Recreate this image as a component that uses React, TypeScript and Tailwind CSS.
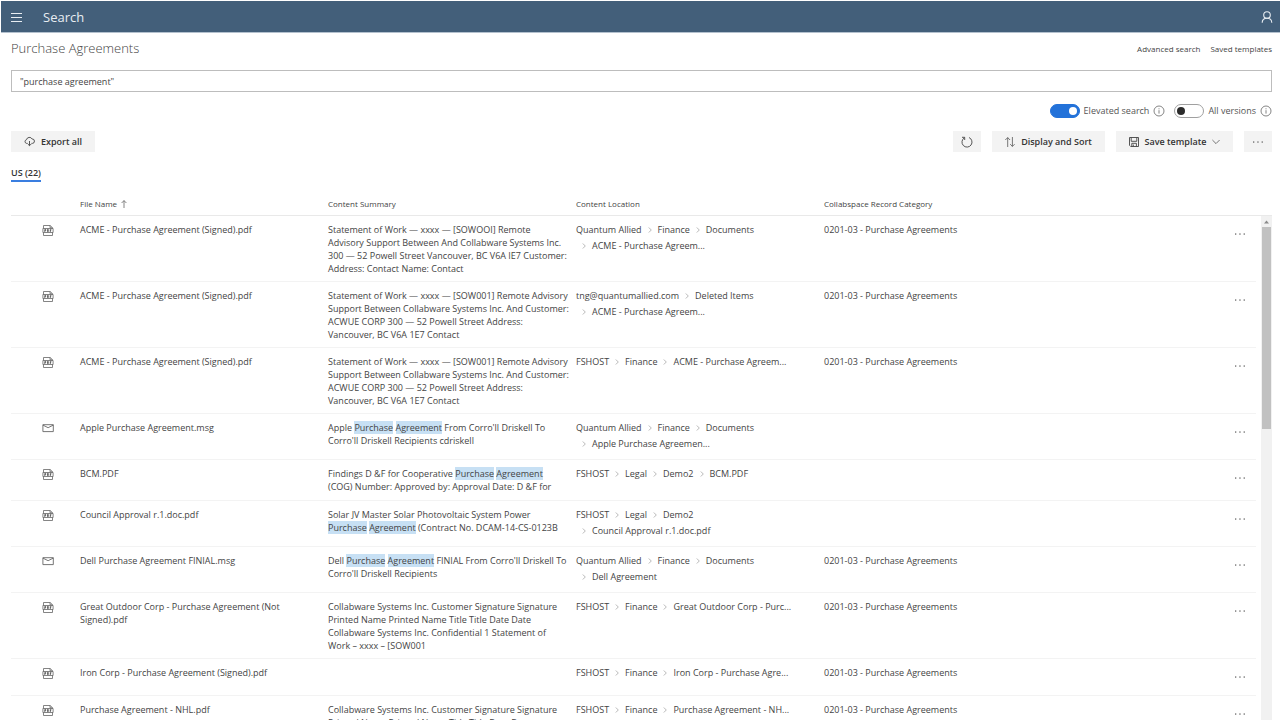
import { Fragment, type ReactNode } from "react";

type Kind = "pdf" | "msg";

interface Row {
  kind: Kind;
  name: string;
  summary: string[];
  location: string[][];
  category?: string;
}

const CATEGORY = "0201-03 - Purchase Agreements";

const rows: Row[] = [
  {
    kind: "pdf",
    name: "ACME - Purchase Agreement (Signed).pdf",
    summary: [
      "Statement of Work — xxxx — [SOWOOI] Remote",
      "Advisory Support Between And Collabware Systems Inc.",
      "300 — 52 Powell Street Vancouver, BC V6A IE7 Customer:",
      "Address: Contact Name: Contact",
    ],
    location: [["Quantum Allied", "Finance", "Documents"], ["ACME - Purchase Agreem..."]],
    category: CATEGORY,
  },
  {
    kind: "pdf",
    name: "ACME - Purchase Agreement (Signed).pdf",
    summary: [
      "Statement of Work — xxxx — [SOW001] Remote Advisory",
      "Support Between Collabware Systems Inc. And Customer:",
      "ACWUE CORP 300 — 52 Powell Street Address:",
      "Vancouver, BC V6A 1E7 Contact",
    ],
    location: [["tng@quantumallied.com", "Deleted Items"], ["ACME - Purchase Agreem..."]],
    category: CATEGORY,
  },
  {
    kind: "pdf",
    name: "ACME - Purchase Agreement (Signed).pdf",
    summary: [
      "Statement of Work — xxxx — [SOW001] Remote Advisory",
      "Support Between Collabware Systems Inc. And Customer:",
      "ACWUE CORP 300 — 52 Powell Street Address:",
      "Vancouver, BC V6A 1E7 Contact",
    ],
    location: [["FSHOST", "Finance", "ACME - Purchase Agreem..."]],
    category: CATEGORY,
  },
  {
    kind: "msg",
    name: "Apple Purchase Agreement.msg",
    summary: ["Apple *Purchase* *Agreement* From Corro'll Driskell To", "Corro'll Driskell Recipients cdriskell"],
    location: [["Quantum Allied", "Finance", "Documents"], ["Apple Purchase Agreemen..."]],
  },
  {
    kind: "pdf",
    name: "BCM.PDF",
    summary: ["Findings D &F for Cooperative *Purchase* *Agreement*", "(COG) Number: Approved by: Approval Date: D &F for"],
    location: [["FSHOST", "Legal", "Demo2", "BCM.PDF"]],
  },
  {
    kind: "pdf",
    name: "Council Approval r.1.doc.pdf",
    summary: ["Solar JV Master Solar Photovoltaic System Power", "*Purchase* *Agreement* (Contract No. DCAM-14-CS-0123B"],
    location: [["FSHOST", "Legal", "Demo2"], ["Council Approval r.1.doc.pdf"]],
  },
  {
    kind: "msg",
    name: "Dell Purchase Agreement FINIAL.msg",
    summary: ["Dell *Purchase* *Agreement* FINIAL From Corro'll Driskell To", "Corro'll Driskell Recipients"],
    location: [["Quantum Allied", "Finance", "Documents"], ["Dell Agreement"]],
    category: CATEGORY,
  },
  {
    kind: "pdf",
    name: "Great Outdoor Corp - Purchase Agreement (Not Signed).pdf",
    summary: [
      "Collabware Systems Inc. Customer Signature Signature",
      "Printed Name Printed Name Title Title Date Date",
      "Collabware Systems Inc. Confidential 1 Statement of",
      "Work – xxxx – [SOW001",
    ],
    location: [["FSHOST", "Finance", "Great Outdoor Corp - Purc..."]],
    category: CATEGORY,
  },
  {
    kind: "pdf",
    name: "Iron Corp - Purchase Agreement (Signed).pdf",
    summary: [],
    location: [["FSHOST", "Finance", "Iron Corp - Purchase Agre..."]],
    category: CATEGORY,
  },
  {
    kind: "pdf",
    name: "Purchase Agreement - NHL.pdf",
    summary: [
      "Collabware Systems Inc. Customer Signature Signature",
      "Printed Name Printed Name Title Title Date Date",
    ],
    location: [["FSHOST", "Finance", "Purchase Agreement - NH..."]],
    category: CATEGORY,
  },
];

function PdfIcon() {
  return (
    <svg className="block size-3" viewBox="0 0 12 12" fill="none" stroke="#666" strokeWidth="0.8" aria-label="PDF">
      <path d="M1.5 4.5v-3h6.6l2.4 2.2v.8M8 1.5v2.3h2.5M1.5 8.5v3h9v-3" />
      <path d="M.9 4.5h10.2v4H.9z" />
      <path d="M2.8 8V5.4h.9v1.2h-.9M5.5 5.4v2.2h.8V5.4zM8.3 8V5.4h1.1M8.3 6.6h.9" stroke="#333" strokeWidth="0.7" />
    </svg>
  );
}

function MailIcon() {
  return (
    <svg className="block size-3" viewBox="0 0 12 12" fill="none" stroke="#666" strokeWidth="0.9" aria-label="Message">
      <path d="M.9 2.7h10.4v6.9H.9zM.9 3.1l5.2 2.6 5.2-2.6" />
    </svg>
  );
}

function InfoIcon() {
  return (
    <svg className="size-3" viewBox="0 0 12 12" fill="none" stroke="#666" strokeWidth="0.8" aria-hidden="true">
      <circle cx="6" cy="6" r="5" />
      <path d="M6 5.2v3.4M6 3.3v1" />
    </svg>
  );
}

function Dots() {
  return (
    <svg className="h-1 w-3" viewBox="0 0 12 4" fill="#666" aria-hidden="true">
      <rect x="1" y="1.4" width="1.3" height="1.3" />
      <rect x="5.3" y="1.4" width="1.3" height="1.3" />
      <rect x="9.6" y="1.4" width="1.3" height="1.3" />
    </svg>
  );
}

function Crumb() {
  return (
    <svg className="mx-[5px] size-[6px] shrink-0" viewBox="0 0 6 6" fill="none" stroke="#999" strokeWidth="0.7" aria-hidden="true">
      <path d="M1.8.5 4.3 3 1.8 5.5" />
    </svg>
  );
}

function ToolButton({ children, className = "", label }: { children: ReactNode; className?: string; label?: string }) {
  return (
    <button
      type="button"
      aria-label={label}
      className={`flex h-[21px] items-center justify-center bg-[#f3f3f3] text-[9px] font-semibold text-[#333] ${className}`}
    >
      {children}
    </button>
  );
}

function Toggle({ id, label, on }: { id: string; label: string; on?: boolean }) {
  return (
    <div className="flex items-center">
      <input
        id={id}
        type="checkbox"
        role="switch"
        defaultChecked={on}
        className="flex h-[14px] w-[30px] appearance-none items-center rounded-full border border-[#a0a0a0] bg-white px-[2px] before:block before:size-2 before:rounded-full before:bg-[#2b2b2b] checked:justify-end checked:border-[#2372d9] checked:bg-[#2372d9] checked:px-[2px] checked:before:bg-white"
      />
      <label htmlFor={id} className="mx-1 text-[9px] text-[#555]">
        {label}
      </label>
      <InfoIcon />
    </div>
  );
}

function SummaryLine({ text }: { text: string }) {
  return (
    <span className="block whitespace-nowrap">
      {text.split("*").map((part, i) =>
        i % 2 ? (
          <mark key={i} className="bg-[#c7e0f4] text-inherit">
            {part}
          </mark>
        ) : (
          <Fragment key={i}>{part}</Fragment>
        ),
      )}
    </span>
  );
}

export default function App() {
  const cell = "border-b border-[#f3f3f3] p-0 pt-[7px] pb-[6px]";
  const head = "border-b border-[#e9e9e9] p-0 pb-px font-normal";
  return (
    <div className="flex h-screen flex-col overflow-hidden bg-white font-['Open_Sans','Noto_Sans',sans-serif] text-[#444]">
      <header className="mt-px ml-px flex h-8 shrink-0 items-center border-b border-[#b4c1ce] bg-[#435f7a] pr-[7px] pl-[10px] text-white">
        <button type="button" aria-label="Menu">
          <svg className="block h-3 w-[11px]" viewBox="0 0 11 12" stroke="#e8edf2" aria-hidden="true">
            <path d="M0 2.5h11M0 6.5h11M0 10.5h11" />
          </svg>
        </button>
        <span className="ml-[21px] pt-0.5 text-[13px] text-[#e8edf2]">Search</span>
        <button type="button" aria-label="Account" className="ml-auto">
          <svg className="block size-3" viewBox="0 0 12 12" fill="none" stroke="#e8edf2" strokeWidth="1.1" aria-hidden="true">
            <circle cx="6" cy="4" r="3.3" />
            <path d="M1.2 11.8c0-2.6 1.8-4.5 4.8-4.5s4.8 1.9 4.8 4.5" />
          </svg>
        </button>
      </header>

      <main className="flex min-h-0 flex-1 flex-col pr-2 pl-[11px]">
        <div className="flex h-[31px] items-center justify-between">
          <h1 className="text-[13px] font-light">Purchase Agreements</h1>
          <nav className="flex gap-[10px] text-[8px] text-[#444]">
            <a href="#advanced">Advanced search</a>
            <a href="#templates">Saved templates</a>
          </nav>
        </div>

        <input
          type="text"
          aria-label="Search query"
          defaultValue={'"purchase agreement"'}
          className="mt-[6px] h-[22px] w-full shrink-0 border border-[#bdbdbd] px-2 text-[9px] text-[#444]"
        />

        <div className="mt-3 flex h-[14px] shrink-0 items-center justify-end gap-[9px]">
          <Toggle id="elevated" label="Elevated search" on />
          <Toggle id="versions" label="All versions" />
        </div>

        <div className="mt-[13px] flex shrink-0 items-center gap-[11px]">
          <ToolButton className="mr-auto w-[84px] gap-[6px]">
            <svg className="size-[11px]" viewBox="0 0 11 11" fill="none" stroke="#444" strokeWidth="0.9" aria-hidden="true">
              <path d="M3.6 7.4H2.5a1.9 1.9 0 0 1 0-3.7A3 3 0 0 1 8.1 3a2.2 2.2 0 0 1 .3 4.4h-1M5.5 5v4.6M3.8 8l1.7 1.7L7.2 8" />
            </svg>
            Export all
          </ToolButton>
          <ToolButton className="w-7" label="Refresh">
            <svg className="size-3" viewBox="0 0 12 12" fill="none" stroke="#444" strokeWidth="0.9" aria-hidden="true">
              <path d="M8 1.5a5 5 0 1 1-4.6.3M1 1.3h2.7V4" />
            </svg>
          </ToolButton>
          <ToolButton className="w-[113px] gap-[6px]">
            <svg className="size-[10px]" viewBox="0 0 10 10" fill="none" stroke="#555" strokeWidth="0.8" aria-hidden="true">
              <path d="M2.7 10V.6M.3 3 2.7.6 5.1 3M7.4 0v9.4M5.2 7.2l2.2 2.2 2.2-2.2" />
            </svg>
            Display and Sort
          </ToolButton>
          <ToolButton className="w-[117px] gap-[6px]">
            <svg className="size-[10px]" viewBox="0 0 10 10" fill="none" stroke="#444" strokeWidth="0.9" aria-hidden="true">
              <path d="M.5.5h9v9H1.7L.5 8.3zM2.2.5v3.8h5.6V.5M2.8 9.5V6.3h4.6v3.2M4.3 7.5v2" />
            </svg>
            Save template
            <svg className="h-[6px] w-2" viewBox="0 0 8 6" fill="none" stroke="#555" strokeWidth="0.8" aria-hidden="true">
              <path d="m.4 1 3.6 3.6L7.6 1" />
            </svg>
          </ToolButton>
          <ToolButton className="w-7" label="More actions">
            <Dots />
          </ToolButton>
        </div>

        <div className="mt-[13px] flex shrink-0">
          <button type="button" className="h-[17px] border-b-2 border-[#3a7ee0] text-[9px] leading-[15px] font-semibold text-[#333]">
            US (22)
          </button>
        </div>

        <div className="mt-[11px] flex min-h-0 flex-1">
          <div className="min-w-0 flex-1 overflow-hidden">
            <table className="w-full table-fixed border-separate border-spacing-0 text-left text-[9px] leading-[13px]">
              <colgroup>
                <col className="w-[69px]" />
                <col className="w-[248px]" />
                <col className="w-[248px]" />
                <col className="w-[248px]" />
                <col />
                <col className="w-[30px]" />
              </colgroup>
              <thead>
                <tr className="h-[23px] text-[8px] text-[#444]">
                  <th className={head} aria-label="Type" />
                  <th className={head}>
                    <span className="flex items-center gap-1">
                      File Name
                      <svg className="h-2 w-[6px]" viewBox="0 0 6 8" fill="none" stroke="#666" strokeWidth="0.8" aria-hidden="true">
                        <path d="M3 8V.6M.6 3 3 .6 5.4 3" />
                      </svg>
                    </span>
                  </th>
                  <th className={head}>Content Summary</th>
                  <th className={head}>Content Location</th>
                  <th className={head}>Collabspace Record Category</th>
                  <th className={head} aria-label="Actions" />
                </tr>
              </thead>
              <tbody>
                {rows.map((row, i) => (
                  <tr key={i} className="align-top">
                    <td className={`${cell} pl-[31px]`}>
                      <div className="pt-px">{row.kind === "pdf" ? <PdfIcon /> : <MailIcon />}</div>
                    </td>
                    <td className={`${cell} pr-8`}>{row.name}</td>
                    <td className={cell}>
                      {row.summary.length > 0 && (
                        <p className="min-h-[27px]">
                          {row.summary.map((line, j) => (
                            <SummaryLine key={j} text={line} />
                          ))}
                        </p>
                      )}
                    </td>
                    <td className={cell}>
                      {row.location.map((line, j) => (
                        <div key={j} className="flex h-4 items-start whitespace-nowrap">
                          {line.map((part, k) => (
                            <span key={k} className="flex items-center">
                              {(j > 0 || k > 0) && <Crumb />}
                              {part}
                            </span>
                          ))}
                        </div>
                      ))}
                    </td>
                    <td className={cell}>{row.category}</td>
                    <td className="border-b border-[#f3f3f3] p-0">
                      <button type="button" aria-label="Row actions" className="flex h-9 w-7 items-center justify-center">
                        <Dots />
                      </button>
                    </td>
                  </tr>
                ))}
              </tbody>
            </table>
          </div>
          <div className="flex w-4 flex-col" aria-hidden="true">
            <div className="h-[23px] shrink-0 border-b border-[#e9e9e9]" />
            <div className="flex w-[11px] flex-1 flex-col items-center self-end bg-[#f1f1f1]">
              <svg className="h-[11px] w-[7px] shrink-0" viewBox="0 0 7 11" fill="#8a8a8a">
                <path d="M3.5 4.5 6 7.5H1z" />
              </svg>
              <div className="h-[202px] w-[9px] bg-[#c1c1c1]" />
            </div>
          </div>
        </div>
      </main>
    </div>
  );
}
